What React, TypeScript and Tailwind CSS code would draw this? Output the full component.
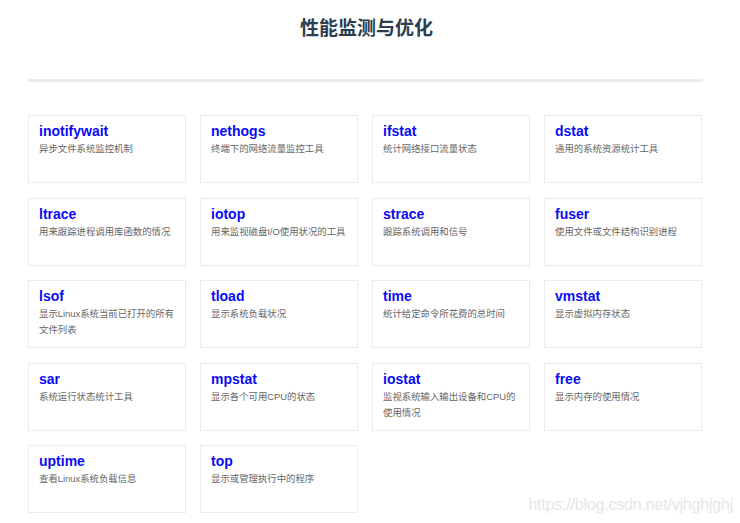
import React from "react"

type Tool = {
  name: string
  desc: string
}

const tools: Tool[] = [
  { name: "inotifywait", desc: "异步文件系统监控机制" },
  { name: "nethogs", desc: "终端下的网络流量监控工具" },
  { name: "ifstat", desc: "统计网络接口流量状态" },
  { name: "dstat", desc: "通用的系统资源统计工具" },
  { name: "ltrace", desc: "用来跟踪进程调用库函数的情况" },
  { name: "iotop", desc: "用来监视磁盘I/O使用状况的工具" },
  { name: "strace", desc: "跟踪系统调用和信号" },
  { name: "fuser", desc: "使用文件或文件结构识别进程" },
  { name: "lsof", desc: "显示Linux系统当前已打开的所有文件列表" },
  { name: "tload", desc: "显示系统负载状况" },
  { name: "time", desc: "统计给定命令所花费的总时间" },
  { name: "vmstat", desc: "显示虚拟内存状态" },
  { name: "sar", desc: "系统运行状态统计工具" },
  { name: "mpstat", desc: "显示各个可用CPU的状态" },
  { name: "iostat", desc: "监视系统输入输出设备和CPU的使用情况" },
  { name: "free", desc: "显示内存的使用情况" },
  { name: "uptime", desc: "查看Linux系统负载信息" },
  { name: "top", desc: "显示或管理执行中的程序" },
]

function ToolCard({ name, desc }: Tool) {
  return (
    <div className="h-[68px] border border-[#ebebeb] bg-white pl-[10px] pr-[6px] pt-[5px]">
      <div className="text-[14px] leading-[20px] font-bold text-[#0a0af5]">{name}</div>
      <p className="text-[9.4px] leading-[16px] text-[#666666]">{desc}</p>
    </div>
  )
}

export default function App() {
  return (
    <div
      className="relative min-h-[523px] w-[740px] bg-white"
      style={{ fontFamily: '"Liberation Sans", Arial, "Noto Sans CJK SC", sans-serif' }}
    >
      {/* 标题 */}
      <div className="pt-[17px] pr-[7px] text-center">
        <h1 className="text-[19px] leading-[24px] font-bold text-[#2c3e50]">性能监测与优化</h1>
      </div>

      <div className="ml-[28px] mt-[38px] h-[3px] w-[675px] bg-[#e8ecf0]" />

      {/* 工具列表 */}
      <div className="ml-[28px] mt-[33px] grid w-[674px] grid-cols-4 gap-x-[14px] gap-y-[14.5px]">
        {tools.map((t) => (
          <ToolCard key={t.name} {...t} />
        ))}
      </div>

      {/* 水印 */}
      <div className="pointer-events-none absolute right-[7px] bottom-[6px] text-[16px] tracking-[-0.2px] text-[#e6e6e6]">
        https://blog.csdn.net/vjhghjghj
      </div>
    </div>
  )
}
